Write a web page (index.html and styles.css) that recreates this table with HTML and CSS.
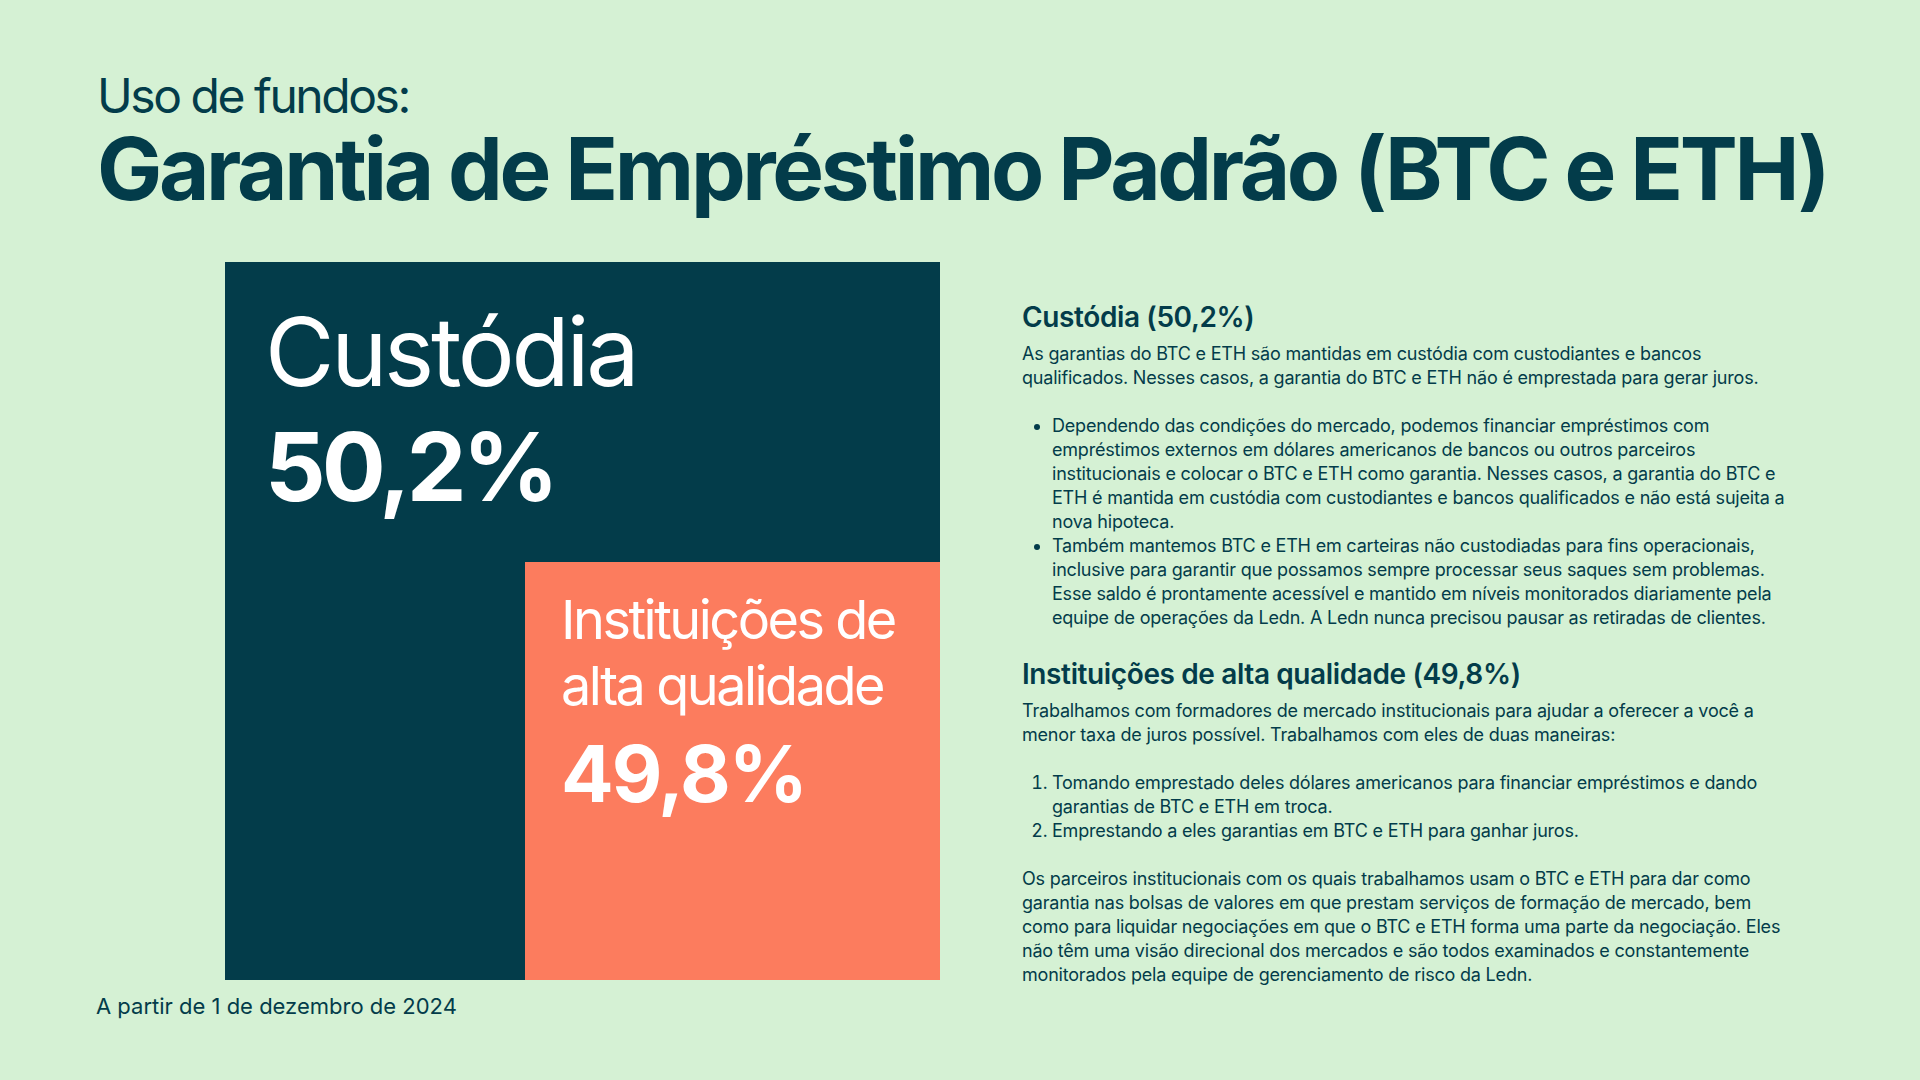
FILE: index.html
```html
<!DOCTYPE html>
<html lang="pt">
<head>
<meta charset="utf-8">
<title>Uso de fundos</title>
<link rel="stylesheet" href="styles.css">
</head>
<body>
<div class="page">
  <header class="header">
    <div class="eyebrow">Uso de fundos:</div>
    <h1 class="title">Garantia de Empréstimo Padrão (BTC e ETH)</h1>
  </header>
  <main class="content">
    <section class="chart-col">
      <div class="treemap">
        <div class="tile-label">
          <div class="tile-name big">Custódia</div>
          <div class="tile-value big">50,2%</div>
        </div>
        <div class="tile-orange">
          <div class="tile-name mid">Instituições de<br>alta qualidade</div>
          <div class="tile-value mid">49,8%</div>
        </div>
      </div>
      <p class="asof">A partir de 1 de dezembro de 2024</p>
    </section>
    <section class="text-col">
      <h2 class="sec-title">Custódia (50,2%)</h2>
      <p class="body">As garantias do BTC e ETH são mantidas em custódia com custodiantes e bancos qualificados. Nesses casos, a garantia do BTC e ETH não é emprestada para gerar juros.</p>
      <ul class="list">
        <li>Dependendo das condições do mercado, podemos financiar empréstimos com empréstimos externos em dólares americanos de bancos ou outros parceiros institucionais e colocar o BTC e ETH como garantia. Nesses casos, a garantia do BTC e ETH é mantida em custódia com custodiantes e bancos qualificados e não está sujeita a nova hipoteca.</li>
        <li>Também mantemos BTC e ETH em carteiras não custodiadas para fins operacionais, inclusive para garantir que possamos sempre processar seus saques sem problemas. Esse saldo é prontamente acessível e mantido em níveis monitorados diariamente pela equipe de operações da Ledn. A Ledn nunca precisou pausar as retiradas de clientes.</li>
      </ul>
      <h2 class="sec-title second">Instituições de alta qualidade (49,8%)</h2>
      <p class="body">Trabalhamos com formadores de mercado institucionais para ajudar a oferecer a você a menor taxa de juros possível. Trabalhamos com eles de duas maneiras:</p>
      <ol class="list">
        <li>Tomando emprestado deles dólares americanos para financiar empréstimos e dando garantias de BTC e ETH em troca.</li>
        <li>Emprestando a eles garantias em BTC e ETH para ganhar juros.</li>
      </ol>
      <p class="body">Os parceiros institucionais com os quais trabalhamos usam o BTC e ETH para dar como garantia nas bolsas de valores em que prestam serviços de formação de mercado, bem como para liquidar negociações em que o BTC e ETH forma uma parte da negociação. Eles não têm uma visão direcional dos mercados e são todos examinados e constantemente monitorados pela equipe de gerenciamento de risco da Ledn.</p>
    </section>
  </main>
</div>
</body>
</html>
```

FILE: styles.css
```css
* { box-sizing: border-box; }
html, body { margin: 0; padding: 0; }
body {
  background: #d5f1d4;
  color: #033c4a;
  font-family: Inter, "Noto Sans", "Liberation Sans", sans-serif;
  width: 1920px;
  height: 1080px;
  overflow: hidden;
}
.page {
  padding: 76px 0 0 97px;
}
.eyebrow {
  font-size: 48px;
  line-height: 40px;
  font-weight: 400;
  letter-spacing: -2.45px;
}
.title {
  margin: 5px 0 0 0;
  font-size: 87px;
  line-height: 96px;
  font-weight: 700;
  letter-spacing: -3.35px;
}
.content {
  display: grid;
  grid-template-columns: 715px 773px;
  column-gap: 82px;
  margin-top: 45px;
  padding-left: 128px;
  align-items: start;
}
.chart-col { display: flex; flex-direction: column; }
.treemap {
  width: 715px;
  height: 718px;
  background: #033c4a;
  display: flex;
  flex-direction: column;
}
.tile-label {
  padding: 32px 0 0 40px;
  color: #fff;
}
.tile-name.big {
  font-size: 95px;
  line-height: 115px;
  font-weight: 400;
  letter-spacing: -3.25px;
}
.tile-value.big {
  font-size: 95px;
  line-height: 115px;
  font-weight: 700;
  letter-spacing: -4px;
}
.tile-orange {
  margin-top: auto;
  align-self: flex-end;
  width: 415px;
  height: 418px;
  background: #fc7c5e;
  color: #fff;
  padding: 25px 0 0 36px;
}
.tile-name.mid {
  font-size: 54px;
  line-height: 66px;
  font-weight: 400;
  letter-spacing: -2.5px;
}
.tile-value.mid {
  margin-top: 11px;
  font-size: 78px;
  line-height: 88px;
  font-weight: 700;
  letter-spacing: -2px;
}
.asof {
  margin: 14px 0 0 -129px;
  font-size: 22px;
  line-height: 24px;
  letter-spacing: 0;
}
.text-col {
  padding-top: 38px;
}
.sec-title {
  margin: 0;
  font-size: 28px;
  line-height: 34px;
  font-weight: 600;
  letter-spacing: -0.38px;
}
.sec-title.second { margin-top: 26px; }
.body {
  margin: 8px 0 0 0;
  font-size: 18px;
  line-height: 24px;
  letter-spacing: -0.2px;
}
.list {
  margin: 24px 0 24px 0;
  padding-left: 30px;
  font-size: 18px;
  line-height: 24px;
  letter-spacing: -0.2px;
}
.list + .sec-title { margin-top: 27px; }
.list + .body { margin-top: 0; }
```
